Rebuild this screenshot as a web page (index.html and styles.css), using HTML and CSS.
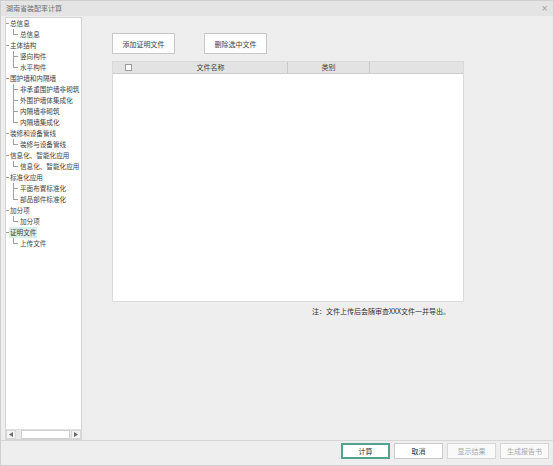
FILE: index.html
```html
<!DOCTYPE html>
<html lang="zh-CN">
<head>
<meta charset="utf-8">
<title>湖南省装配率计算</title>
<link rel="stylesheet" href="styles.css">
</head>
<body>
<div class="window">
  <div class="titlebar">
    <span class="title">湖南省装配率计算</span>
    <span class="close">×</span>
  </div>
  <div class="content">
    <div class="tree-panel">
      <ul class="tree">
        <li class="row lv0"><span class="dash"></span><span class="label">总信息</span></li>
        <li class="row lv1 last"><span class="elbow"></span><span class="label">总信息</span></li>
        <li class="row lv0"><span class="dash"></span><span class="label">主体结构</span></li>
        <li class="row lv1 mid"><span class="elbow"></span><span class="label">竖向构件</span></li>
        <li class="row lv1 last"><span class="elbow"></span><span class="label">水平构件</span></li>
        <li class="row lv0"><span class="dash"></span><span class="label">围护墙和内隔墙</span></li>
        <li class="row lv1 mid"><span class="elbow"></span><span class="label">非承重围护墙非砌筑</span></li>
        <li class="row lv1 mid"><span class="elbow"></span><span class="label">外围护墙体集成化</span></li>
        <li class="row lv1 mid"><span class="elbow"></span><span class="label">内隔墙非砌筑</span></li>
        <li class="row lv1 last"><span class="elbow"></span><span class="label">内隔墙集成化</span></li>
        <li class="row lv0"><span class="dash"></span><span class="label">装修和设备管线</span></li>
        <li class="row lv1 last"><span class="elbow"></span><span class="label">装修与设备管线</span></li>
        <li class="row lv0"><span class="dash"></span><span class="label">信息化、智能化应用</span></li>
        <li class="row lv1 last"><span class="elbow"></span><span class="label">信息化、智能化应用</span></li>
        <li class="row lv0"><span class="dash"></span><span class="label">标准化应用</span></li>
        <li class="row lv1 mid"><span class="elbow"></span><span class="label">平面布置标准化</span></li>
        <li class="row lv1 last"><span class="elbow"></span><span class="label">部品部件标准化</span></li>
        <li class="row lv0"><span class="dash"></span><span class="label">加分项</span></li>
        <li class="row lv1 last"><span class="elbow"></span><span class="label">加分项</span></li>
        <li class="row lv0"><span class="dash"></span><span class="label selected">证明文件</span></li>
        <li class="row lv1 last"><span class="elbow"></span><span class="label">上传文件</span></li>
      </ul>
      <div class="hscroll">
        <span class="sb-btn"><svg width="4" height="5" viewBox="0 0 4 5"><polygon points="4,0 4,5 0,2.5" fill="#6a6a6a"/></svg></span>
        <span class="sb-track"><span class="sb-thumb"></span></span>
        <span class="sb-btn"><svg width="4" height="5" viewBox="0 0 4 5"><polygon points="0,0 0,5 4,2.5" fill="#6a6a6a"/></svg></span>
      </div>
    </div>
    <div class="main">
      <div class="toolbar">
        <button class="btn">添加证明文件</button>
        <button class="btn">删除选中文件</button>
      </div>
      <div class="grid">
        <div class="grid-head">
          <div class="col col-check"><span class="checkbox"></span></div>
          <div class="col col-name">文件名称</div>
          <div class="col col-type">类别</div>
          <div class="col col-rest"></div>
        </div>
        <div class="grid-body"></div>
      </div>
      <div class="note">注：文件上传后会随审查XXX文件一并导出。</div>
    </div>
  </div>
  <div class="footer">
    <button class="fbtn primary">计算</button>
    <button class="fbtn">取消</button>
    <button class="fbtn disabled">显示结果</button>
    <button class="fbtn disabled">生成报告书</button>
  </div>
</div>
</body>
</html>
```

FILE: styles.css
```css
* { box-sizing: border-box; }

html, body {
  margin: 0;
  padding: 0;
}

body {
  font-family: "Noto Sans CJK SC", "Noto Sans", "Liberation Sans", sans-serif;
  font-size: 7px;
  color: #333;
  background: #ffffff;
}

.window {
  width: 554px;
  height: 466px;
  border: 1px solid #cfcfcf;
  background: #eeeeee;
  display: flex;
  flex-direction: column;
}

.titlebar {
  height: 15px;
  background: #e4e4e4;
  display: flex;
  align-items: center;
  justify-content: space-between;
  padding: 0 5px 0 5px;
  flex: none;
}

.title {
  color: #6f6f6f;
  font-size: 7px;
  line-height: 15px;
}

.close {
  color: #9a9a9a;
  font-family: "DejaVu Sans", sans-serif;
  font-size: 8px;
  line-height: 15px;
}

.content {
  flex: 1;
  display: flex;
  padding: 1px 0 0 4px;
  min-height: 0;
}

.tree-panel {
  width: 77px;
  height: 423px;
  border: 1px solid #d4d4d4;
  background: #ffffff;
  display: flex;
  flex-direction: column;
  flex: none;
}

.tree {
  list-style: none;
  margin: 0;
  padding: 0;
  flex: 1;
  overflow: hidden;
}

.row {
  height: 11px;
  display: flex;
  align-items: stretch;
  white-space: nowrap;
}

.label {
  font-size: 6.6px;
  line-height: 11px;
  color: #444;
  padding: 0 1px;
}

.label.selected {
  background: #d8efe6;
}

.dash {
  width: 3px;
  flex: none;
  background: linear-gradient(#a0a0a0, #a0a0a0) no-repeat 0 50% / 100% 1px;
}

.elbow {
  width: 5px;
  margin-left: 7px;
  margin-right: 1px;
  flex: none;
}

.lv1.last .elbow {
  background:
    linear-gradient(#a0a0a0, #a0a0a0) no-repeat 0 0 / 1px 6px,
    linear-gradient(#a0a0a0, #a0a0a0) no-repeat 0 5px / 100% 1px;
}

.lv1.mid .elbow {
  background:
    linear-gradient(#a0a0a0, #a0a0a0) no-repeat 0 0 / 1px 100%,
    linear-gradient(#a0a0a0, #a0a0a0) no-repeat 0 5px / 100% 1px;
}

.hscroll {
  height: 10px;
  display: flex;
  background: #e9e9e9;
  border-top: 1px solid #e0e0e0;
  flex: none;
}

.sb-btn {
  width: 10px;
  flex: none;
  display: flex;
  align-items: center;
  justify-content: center;
  background: #f4f4f4;
  border: 1px solid #d8d8d8;
}

.sb-track {
  flex: 1;
  display: flex;
  padding: 0 1px 0 5px;
}

.sb-thumb {
  flex: 1;
  background: #ffffff;
  border: 1px solid #cfcfcf;
}

.main {
  flex: 1;
  padding: 16px 0 0 30px;
  display: flex;
  flex-direction: column;
}

.toolbar {
  display: flex;
  gap: 29px;
  height: 21px;
}

.btn {
  width: 63px;
  height: 21px;
  background: #fdfdfd;
  border: 1px solid #c8c8c8;
  font-family: inherit;
  font-size: 7px;
  color: #444;
  padding: 0;
  margin: 0;
}

.grid {
  margin-top: 7px;
  width: 352px;
  height: 241px;
  border: 1px solid #dadada;
  background: #ffffff;
  display: flex;
  flex-direction: column;
}

.grid-head {
  height: 12px;
  background: #e3e3e3;
  border-bottom: 1px solid #cccccc;
  display: flex;
  flex: none;
}

.col {
  line-height: 11px;
  color: #444;
  text-align: center;
}

.col-check {
  width: 21px;
  display: flex;
  align-items: center;
  padding-left: 12px;
}

.checkbox {
  width: 7px;
  height: 7px;
  border: 1px solid #9c9c9c;
  background: #ffffff;
}

.col-name {
  width: 154px;
  border-right: 1px solid #c9c9c9;
}

.col-type {
  width: 82px;
  border-right: 1px solid #c9c9c9;
}

.col-rest {
  flex: 1;
}

.grid-body {
  flex: 1;
}

.note {
  margin-top: 4px;
  padding-left: 200px;
  line-height: 10px;
  color: #333;
  white-space: nowrap;
}

.footer {
  height: 25px;
  border-top: 1px solid #d6d6d6;
  display: flex;
  justify-content: flex-end;
  align-items: flex-start;
  gap: 4px;
  padding: 2px 4px 0 0;
  flex: none;
}

.fbtn {
  width: 49px;
  height: 16px;
  background: #ffffff;
  border: 1px solid #cccccc;
  font-family: inherit;
  font-size: 7px;
  color: #333;
  padding: 0;
  margin: 0;
}

.fbtn.primary {
  border: 2px solid #55a38f;
}

.fbtn.disabled {
  color: #a8a8a8;
  background: #f9f9f9;
  border-color: #d6d6d6;
}
```
